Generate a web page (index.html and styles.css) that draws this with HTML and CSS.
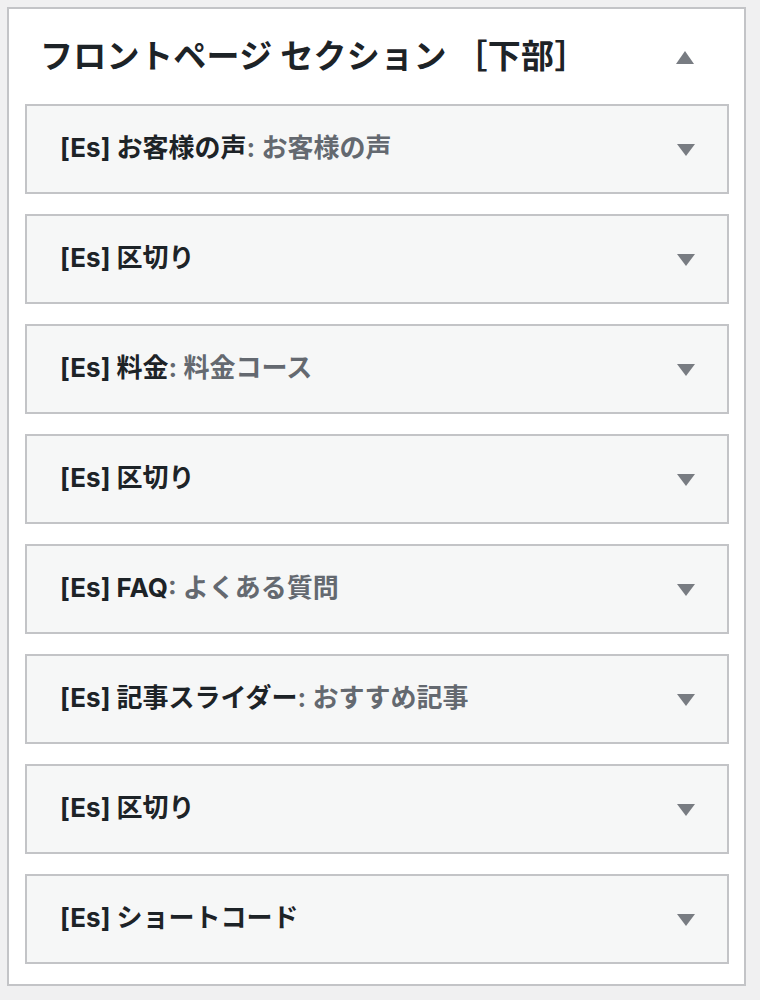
FILE: index.html
```html
<!DOCTYPE html>
<html lang="ja">
<head>
<meta charset="utf-8">
<link rel="stylesheet" href="styles.css">
</head>
<body>
<div class="panel">
  <div class="panel-head">
    <h2 class="panel-title">フロントページ セクション ［下部］</h2>
    <span class="arrow up"></span>
  </div>
  <div class="list">
    <div class="item"><span class="name">[Es] お客様の声<span class="sub">: お客様の声</span></span><span class="arrow down"></span></div>
    <div class="item"><span class="name">[Es] 区切り</span><span class="arrow down"></span></div>
    <div class="item"><span class="name">[Es] 料金<span class="sub">: 料金コース</span></span><span class="arrow down"></span></div>
    <div class="item"><span class="name">[Es] 区切り</span><span class="arrow down"></span></div>
    <div class="item"><span class="name">[Es] FAQ<span class="sub">: よくある質問</span></span><span class="arrow down"></span></div>
    <div class="item"><span class="name">[Es] 記事スライダー<span class="sub">: おすすめ記事</span></span><span class="arrow down"></span></div>
    <div class="item"><span class="name">[Es] 区切り</span><span class="arrow down"></span></div>
    <div class="item"><span class="name">[Es] ショートコード</span><span class="arrow down"></span></div>
  </div>
</div>
</body>
</html>
```

FILE: styles.css
```css
html, body {
  margin: 0;
  padding: 0;
  background: #f0f0f1;
}
body {
  padding: 7px 14px 14px 7px;
  font-family: Inter, "Noto Sans CJK JP", sans-serif;
  color: #1d2327;
}
.panel {
  background: #fff;
  border: 2px solid #c3c4c7;
  padding: 0 15px 20px 16px;
  width: 704px;
}
.panel-head {
  height: 91px;
  display: flex;
  align-items: center;
  justify-content: space-between;
  padding: 0 35px 4px 15px;
}
.panel-title {
  margin: 0;
  font-size: 33px;
  font-weight: 700;
  line-height: 1.4;
  letter-spacing: 0.3px;
  font-family: "Noto Sans CJK JP", sans-serif;
}
.list {
  display: flex;
  flex-direction: column;
  gap: 20px;
}
.item {
  height: 86px;
  background: #f6f7f7;
  border: 2px solid #c3c4c7;
  display: flex;
  align-items: center;
  justify-content: space-between;
  padding: 0 32px 0 33px;
}
.name {
  font-size: 26px;
  font-weight: 700;
  line-height: 1.4;
  color: #1d2327;
  margin-top: -2px;
}
.sub {
  color: #646970;
}
.arrow {
  width: 0;
  height: 0;
  border-left: 9px solid transparent;
  border-right: 9px solid transparent;
}
.arrow.down {
  border-top: 12px solid #787c82;
  margin-top: 2px;
}
.arrow.up {
  border-bottom: 13px solid #787c82;
  margin-top: 6px;
}
```
